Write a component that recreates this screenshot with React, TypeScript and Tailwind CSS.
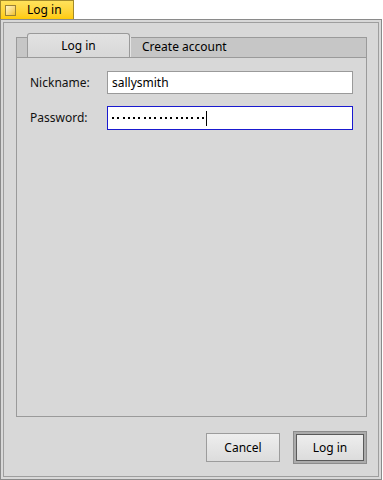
export default function App() {
  const font = { fontFamily: '"Noto Sans", "DejaVu Sans", sans-serif' }

  return (
    <div className="w-[383px] h-[480px] bg-white text-[12px] text-black" style={font}>
      {/* title tab */}
      <div className="flex items-center w-[74px] h-[19px] border border-b-0 border-[#a38a2a] bg-gradient-to-b from-[#ffe25a] to-[#ffcb00]">
        <div className="ml-[4px] w-[11px] h-[11px] border border-[#9a8236] bg-gradient-to-br from-[#fff6c8] to-[#f2c10c]" />
        <span className="ml-[11px] leading-none">Log in</span>
      </div>

      {/* window frame */}
      <div className="w-[382px] h-[461px] border border-[#8a8a8a] bg-[#d8d8d8] p-[2px]">
        <div className="h-full border border-[#9e9e9e] flex flex-col pl-[12px] pr-[11px] pt-[10px] pb-[12px]">
          {/* tab view */}
          <div className="flex-1 flex flex-col">
            <div className="relative flex items-end h-[24px]">
              <div className="absolute left-0 right-0 bottom-0 h-[20px] border border-b-0 border-[#9a9a9a] bg-[#c6c6c6]" />
              <div className="relative ml-[11px] w-[103px] h-[24px] border border-b-0 border-[#9a9a9a] rounded-t-[3px] bg-gradient-to-b from-[#e2e2e2] to-[#d8d8d8] flex items-center justify-center">
                <span className="mt-[1px]">Log in</span>
              </div>
              <div className="relative h-[20px] pl-[11px] pr-[10px] border-l border-[#e4e4e4] flex items-center">
                <span>Create account</span>
              </div>
            </div>
            <div className="flex-1 border border-[#9a9a9a] bg-[#d8d8d8] px-[13px] pt-[13px]">
              <div className="grid grid-cols-[77px_1fr] gap-y-[12px] items-center">
                <span className="text-[#111]">Nickname:</span>
                <div className="h-[23px] w-[246px] border border-[#9a9a9a] bg-white flex items-center pl-[4px]">
                  sallysmith
                </div>
                <span className="text-[#111]">Password:</span>
                <div className="h-[24px] w-[246px] border border-[#1a1ad0] bg-white flex items-center pl-[4px]">
                  <div className="flex gap-[3.3px]">
                    {Array.from({ length: 18 }).map((_, i) => (
                      <span key={i} className="w-[2px] h-[2px] bg-black" />
                    ))}
                  </div>
                  <span className="ml-[2px] w-px h-[15px] bg-black" />
                </div>
              </div>
            </div>
          </div>

          {/* buttons */}
          <div className="flex justify-end items-center gap-[13px] mt-[14px]">
            <button className="w-[74px] h-[29px] border border-[#9c9c9c] bg-gradient-to-b from-[#eeeeee] to-[#dcdcdc] text-[12px]">
              Cancel
            </button>
            <div className="w-[74px] h-[33px] border border-[#8c8c8c] bg-[#ababab] p-[2px]">
              <button className="w-full h-full border border-[#5a5a5a] bg-gradient-to-b from-[#eeeeee] to-[#dcdcdc] text-[12px]">
                Log in
              </button>
            </div>
          </div>
        </div>
      </div>
    </div>
  )
}
